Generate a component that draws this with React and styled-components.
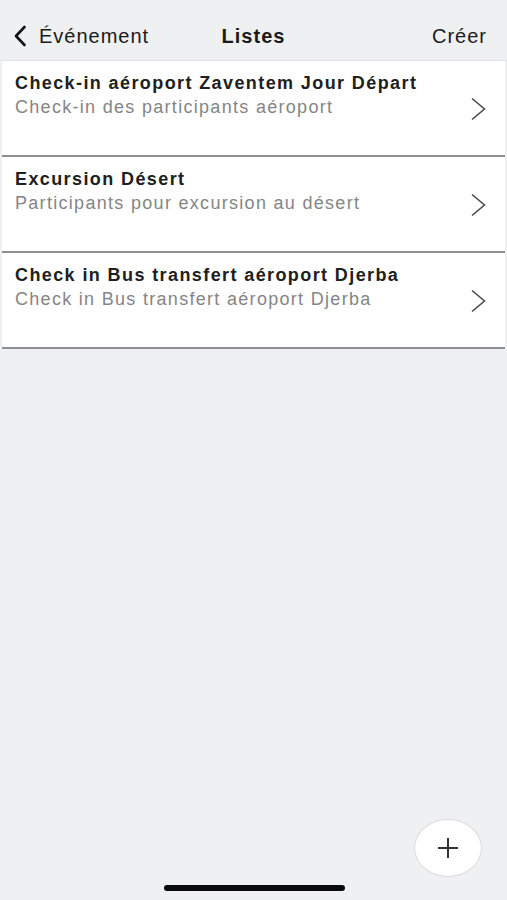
import React from 'react'
import styled, { createGlobalStyle } from 'styled-components';

const GlobalStyle = createGlobalStyle`
      html, body {
            margin: 0;
            padding: 0;
            background: #eff0f2;
            font-family: "Liberation Sans", Arial, sans-serif;
      }
`;

const Screen = styled.div`
      position: relative;
      width: 507px;
      height: 900px;
      background: #eff0f2;
      overflow: hidden;
      display: flex;
      flex-direction: column;
`;

const Header = styled.header`
      height: 61px;
      display: grid;
      grid-template-columns: 1fr auto 1fr;
      align-items: center;
      padding: 12px 20px 0 12px;
      box-sizing: border-box;
      border-bottom: 1px solid #e2e3e5;
      color: #1a1a1a;
      font-size: 20px;
      letter-spacing: 1px;
`;

const Back = styled.div`
      display: flex;
      align-items: center;
      gap: 12px;
`;

const Title = styled.div`
      font-weight: 700;
      margin-left: 8px;
`;

const Action = styled.div`
      justify-self: end;
`;

const List = styled.div`
      display: flex;
      flex-direction: column;
      margin: 0 2px;
      background: #ffffff;
`;

const Row = styled.div`
      height: 96px;
      box-sizing: border-box;
      display: flex;
      align-items: center;
      padding: 2px 19px 0 13px;
      border-bottom: 2px solid #8f8f8f;
`;

const Texts = styled.div`
      flex: 1;
      align-self: flex-start;
      padding-top: 8px;
`;

const RowTitle = styled.div`
      font-weight: 700;
      font-size: 18px;
      letter-spacing: 1.4px;
      color: #202020;
      line-height: 24px;
`;

const RowSub = styled.div`
      font-size: 18px;
      letter-spacing: 1.3px;
      color: #858585;
      line-height: 24px;
`;

const Fab = styled.button`
      position: absolute;
      left: 414px;
      top: 819px;
      width: 68px;
      height: 58px;
      border-radius: 50%;
      background: #ffffff;
      border: 1px solid #dcdcdc;
      display: flex;
      align-items: center;
      justify-content: center;
      padding: 0;
`;

const HomeBar = styled.div`
      position: absolute;
      left: 164px;
      top: 885px;
      width: 181px;
      height: 6px;
      border-radius: 3px;
      background: #0a0a0a;
`;

const Chevron = () => (
      <svg width="16" height="24" viewBox="0 0 16 24">
            <path d="M2 1.5 L14.5 12 L2 22.5" fill="none" stroke="#4a4a4a" strokeWidth="1.6" />
      </svg>
);

const items = [
      { title: 'Check-in aéroport Zaventem Jour Départ', sub: 'Check-in des participants aéroport' },
      { title: 'Excursion Désert', sub: 'Participants pour excursion au désert' },
      { title: 'Check in Bus transfert aéroport Djerba', sub: 'Check in Bus transfert aéroport Djerba' },
];

const App = () => {
      return (
            <Screen>
                  <GlobalStyle />
                  <Header>
                        <Back>
                              <svg width="15" height="22" viewBox="0 0 15 22">
                                    <path d="M12.5 2 L4 11 L12.5 20" fill="none" stroke="#111" strokeWidth="2.6" strokeLinecap="round" strokeLinejoin="round" />
                              </svg>
                              <span>Événement</span>
                        </Back>
                        <Title>Listes</Title>
                        <Action>Créer</Action>
                  </Header>
                  <List>
                        {items.map((item) => (
                              <Row key={item.title}>
                                    <Texts>
                                          <RowTitle>{item.title}</RowTitle>
                                          <RowSub>{item.sub}</RowSub>
                                    </Texts>
                                    <Chevron />
                              </Row>
                        ))}
                  </List>
                  <Fab>
                        <svg width="22" height="22" viewBox="0 0 22 22">
                              <path d="M11 1 V21 M1 11 H21" stroke="#333" strokeWidth="2" />
                        </svg>
                  </Fab>
                  <HomeBar />
            </Screen>
      )
};

export default App;
